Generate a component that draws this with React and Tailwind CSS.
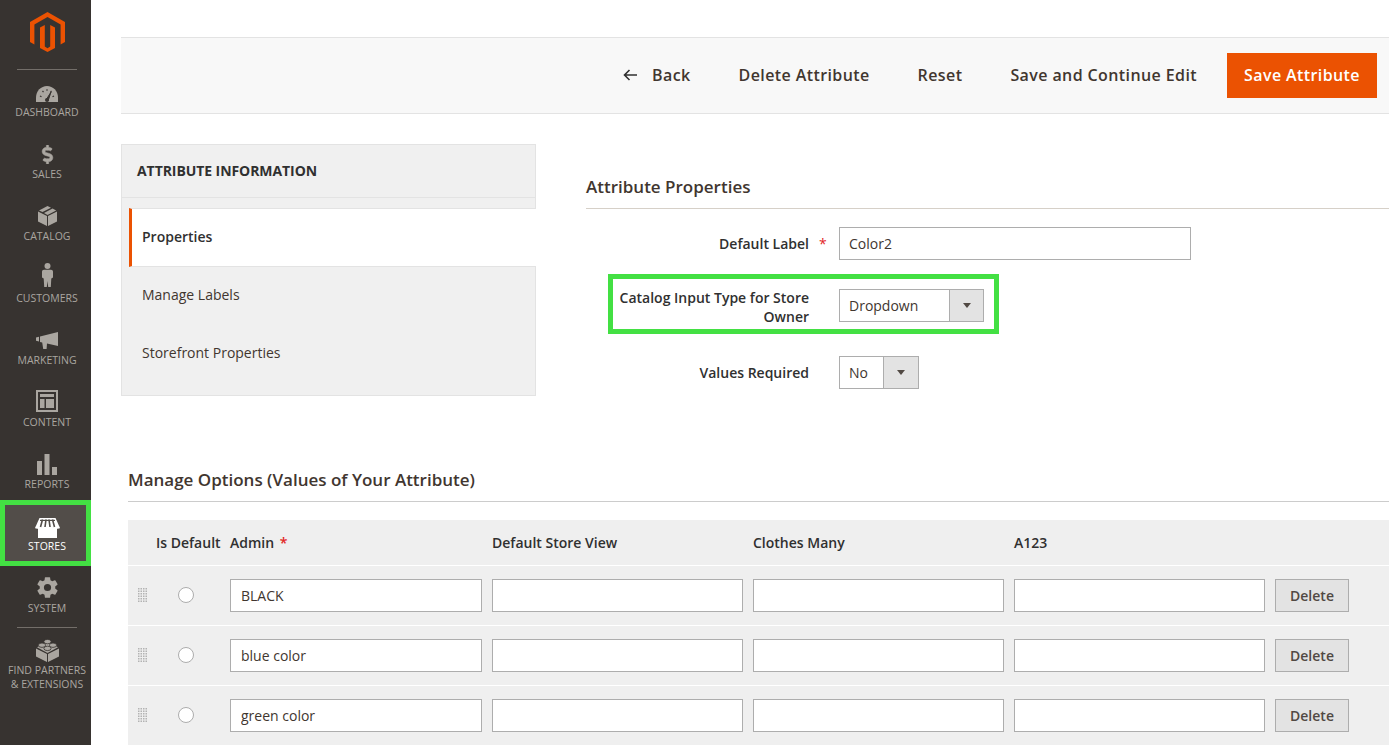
import { FaDollarSign } from "react-icons/fa";
import { IoSettingsSharp } from "react-icons/io5";

function MagentoLogo() {
  return (
    <svg width="35" height="40" viewBox="0 0 35 40" fill="#eb5202">
      <path d="M17.5 0L35 10V30L30.6 32.5V12.6L17.5 5L4.4 12.6V32.5L0 30V10Z" />
      <path d="M10 15.6L14.8 13V34.6L17.5 36.2L20.2 34.6V13L25 15.6V36L17.5 40L10 36Z" />
    </svg>
  );
}

function GaugeIcon() {
  return (
    <svg width="22" height="16" viewBox="0 0 22 16" className="mb-[3px]">
      <path d="M0 16V11.5C0 5 5 0 11 0S22 5 22 11.5V16Z" fill="currentColor" />
      <path d="M12 15L15 6L10 14Z" fill="#373330" stroke="#373330" strokeWidth="1" />
      <path d="M4 10l1.5.8M6.5 5l1 1.2M11 3.2v1.6M15.5 5l-1 1.2M18 10l-1.5.8" stroke="#373330" strokeWidth="1.2" />
      <circle cx="11" cy="14" r="2" fill="#373330" />
    </svg>
  );
}

function BoxIcon() {
  return (
    <svg width="19" height="20" viewBox="0 0 19 20" className="mb-[3px]" fill="currentColor">
      <path d="M0 5.5L9 10V20L0 15.5Z" />
      <path d="M19 5.5L10 10V20L19 15.5Z" />
      <path d="M9.5 0L13 1.7L4.5 6L1 4.4Z" />
      <path d="M14.5 2.5L18.2 4.4L9.5 8.9L6 7.1Z" />
    </svg>
  );
}

function PersonIcon() {
  return (
    <svg width="11" height="24" viewBox="0 0 11 24" className="mb-[4px]" fill="currentColor">
      <circle cx="5.5" cy="3" r="3" />
      <path d="M2 6.8H9C10.2 6.8 11 7.6 11 8.8V14.5L9.3 15.4L8.8 24H6.2L5.5 18L4.8 24H2.2L1.7 15.4L0 14.5V8.8C0 7.6.8 6.8 2 6.8Z" />
    </svg>
  );
}

function MegaphoneIcon() {
  return (
    <svg width="22" height="17" viewBox="0 0 22 17" className="mb-[4px]" fill="currentColor">
      <path d="M0 5.5L3 4.8V9.5L0 8.8Z" />
      <path d="M4 4.6L22 0V14L11 11.4L10.6 17H7.2L6.2 10.5L4 10Z" />
    </svg>
  );
}

function ContentIcon() {
  return (
    <svg width="22" height="22" viewBox="0 0 22 22" className="mb-[3px]" fill="currentColor">
      <path fillRule="evenodd" d="M0 0H22V22H0ZM2 2V20H20V2Z" />
      <path d="M4 4H18V7H4ZM4 9H8.5V18H4ZM10 9H18V18H10Z" />
    </svg>
  );
}

function BarsIcon() {
  return (
    <svg width="20" height="21" viewBox="0 0 20 21" className="mb-[2px]" fill="currentColor">
      <path d="M0 7H5V21H0ZM7.5 0H12.5V21H7.5ZM15 13H20V21H15Z" />
    </svg>
  );
}

function StoreIcon() {
  return (
    <svg width="25" height="20" viewBox="0 0 25 20" className="mb-[1px]">
      <path d="M3 10H22V20H3Z" fill="#fff" />
      <path d="M4.5 0H20.5L25 10C25 11.5 0 11.5 0 10Z" fill="#fff" />
      <path d="M7.5 1.5L5.5 9M11 1.5L10 9M14 1.5L15 9M17.5 1.5L19.5 9" stroke="#524d49" strokeWidth="1.6" />
      <path d="M5 1.8H20V3H5Z" fill="#524d49" />
    </svg>
  );
}

function BrickIcon() {
  return (
    <svg width="23" height="23" viewBox="0 0 23 23" className="mb-[1px]" fill="currentColor">
      <path d="M0 9.5L11 15V23L0 17.5Z" />
      <path d="M23 9.5L12 15V23L23 17.5Z" />
      <path d="M11.5 3L22 8.2L11.5 14L1 8.2Z" />
      <ellipse cx="11.5" cy="2.6" rx="3.6" ry="2.2" stroke="#373330" strokeWidth=".8" />
      <ellipse cx="6" cy="6.2" rx="3.6" ry="2.2" stroke="#373330" strokeWidth=".8" />
      <ellipse cx="17" cy="6.2" rx="3.6" ry="2.2" stroke="#373330" strokeWidth=".8" />
      <ellipse cx="11.5" cy="9.4" rx="3.6" ry="2.2" stroke="#373330" strokeWidth=".8" />
    </svg>
  );
}

function DragHandle() {
  const dots = [];
  for (let r = 0; r < 6; r++) {
    for (let c = 0; c < 4; c++) {
      dots.push(<rect key={r + "-" + c} x={c * 2.5} y={r * 2.5} width="1.5" height="1.5" />);
    }
  }
  return (
    <svg width="9" height="14" viewBox="0 0 9 14" fill="#b3b3b3">
      {dots}
    </svg>
  );
}

function MenuItem({ icon, label }) {
  return (
    <div className="h-[62px] pl-[3px] flex flex-col items-center text-[#aaa6a0]">
      <div className="h-[35px] flex items-end justify-center">{icon}</div>
      <span className="text-[10.5px] leading-[14px] uppercase">{label}</span>
    </div>
  );
}

function Sidebar() {
  return (
    <aside className="w-[91px] h-[745px] shrink-0 bg-[#373330] flex flex-col">
      <div className="pt-[12px] pl-[3px] flex justify-center">
        <MagentoLogo />
      </div>
      <div className="mt-[17px] ml-[17px] w-[60px] h-px bg-[#736e69]" />
      <MenuItem label="Dashboard" icon={<GaugeIcon />} />
      <MenuItem label="Sales" icon={<FaDollarSign className="mb-[3px] text-[19px] stroke-current stroke-[14]" />} />
      <MenuItem label="Catalog" icon={<BoxIcon />} />
      <MenuItem label="Customers" icon={<PersonIcon />} />
      <MenuItem label="Marketing" icon={<MegaphoneIcon />} />
      <MenuItem label="Content" icon={<ContentIcon />} />
      <MenuItem label="Reports" icon={<BarsIcon />} />
      <div className="-mt-[4px] h-[66px] border-[5px] border-[#43e043] bg-[#524d49] pl-[3px] flex flex-col items-center text-white">
        <div className="h-[34px] flex items-end justify-center">
          <StoreIcon />
        </div>
        <span className="text-[10.5px] leading-[14px] uppercase">Stores</span>
      </div>
      <MenuItem label="System" icon={<IoSettingsSharp className="mb-[2px] text-[23px]" />} />
      <div className="-mt-[1px] ml-[17px] w-[60px] h-px bg-[#736e69]" />
      <div className="pl-[3px] flex flex-col items-center text-[#aaa6a0]">
        <div className="h-[35px] flex items-end justify-center">
          <BrickIcon />
        </div>
        <span className="text-[10.5px] leading-[14px] uppercase text-center whitespace-nowrap">
          Find Partners
          <br />& Extensions
        </span>
      </div>
    </aside>
  );
}

function Toolbar() {
  return (
    <div className="ml-[30px] h-[77px] bg-[#f8f8f8] border-y border-[#e3e3e3] flex items-center justify-end pr-[12px] text-[16px] font-semibold tracking-[0.025em] text-[#41362f]">
      <div className="flex items-center pb-[2px]">
        <svg width="14" height="12" viewBox="0 0 14 12" className="mr-[15px]" fill="none" stroke="#303030" strokeWidth="1.6">
          <path d="M14 6H1.5M6.5 1L1.5 6L6.5 11" />
        </svg>
        <span>Back</span>
        <span className="ml-[48px]">Delete Attribute</span>
        <span className="ml-[48px]">Reset</span>
        <span className="ml-[48px]">Save and Continue Edit</span>
      </div>
      <button className="ml-[30px] h-[45px] w-[150px] pb-[2px] bg-[#eb5202] text-white font-semibold tracking-[0.025em]">
        Save Attribute
      </button>
    </div>
  );
}

function SideTabs() {
  return (
    <div className="w-[415px] h-[252px] shrink-0 bg-[#f0f0f0] border border-[#e3e3e3]">
      <div className="h-[53px] border-b border-[#e3e3e3] pl-[15px] pb-[2px] flex items-center text-[14px] font-bold tracking-[-0.005em] uppercase text-[#303030]">
        Attribute Information
      </div>
      <div className="h-[10px]" />
      <div className="-mr-px ml-[7px] h-[59px] bg-white border-y border-[#e3e3e3] border-l-[3px] border-l-[#eb5202] pl-[10px] pb-[2px] flex items-center text-[14px] font-semibold text-[#303030]">
        Properties
      </div>
      <div className="ml-[20px] h-[58px] pb-[4px] flex items-center text-[14px] text-[#41362f]">Manage Labels</div>
      <div className="ml-[20px] h-[58px] pb-[4px] flex items-center text-[14px] text-[#41362f]">Storefront Properties</div>
    </div>
  );
}

function SelectBox({ value, width, arrowWidth }) {
  return (
    <div className={"h-[33px] flex bg-white border border-[#adadad] text-[14px] text-[#41362f] " + width}>
      <span className="flex-1 pl-[9px] leading-[31px]">{value}</span>
      <span className={"flex items-center justify-center bg-[#e3e3e3] border-l border-[#adadad] " + arrowWidth}>
        <span className="w-0 h-0 border-x-[4px] border-x-transparent border-t-[5px] border-t-[#514943]" />
      </span>
    </div>
  );
}

function AttributeProperties() {
  return (
    <div className="flex-1 ml-[50px]">
      <h2 className="mt-[32px] h-[22px] text-[17px] leading-[22px] font-semibold text-[#41362f]">Attribute Properties</h2>
      <div className="mt-[10px] h-px bg-[#d6d0c8]" />
      <div className="mt-[18px] flex items-center h-[33px]">
        <label className="ml-[27px] w-[196px] text-right text-[14px] font-semibold text-[#303030]">Default Label</label>
        <span className="ml-[10px] w-[20px] text-[14px] text-[#e22626]">*</span>
        <input readOnly value="Color2" className="w-[352px] h-[33px] border border-[#adadad] pl-[9px] text-[14px] text-[#41362f] outline-none" />
      </div>
      <div className="mt-[14px] ml-[22px] w-[391px] h-[60px] border-[5px] border-[#43e043] flex items-center">
        <label className="w-[196px] pt-[6px] text-right text-[14px] leading-[19px] font-semibold text-[#303030]">
          Catalog Input Type for Store Owner
        </label>
        <div className="ml-[30px] mt-[3px]">
          <SelectBox value="Dropdown" width="w-[145px]" arrowWidth="w-[34px]" />
        </div>
      </div>
      <div className="mt-[22px] flex items-center h-[33px]">
        <label className="ml-[27px] w-[196px] text-right text-[14px] font-semibold text-[#303030]">Values Required</label>
        <div className="ml-[30px]">
          <SelectBox value="No" width="w-[80px]" arrowWidth="w-[35px]" />
        </div>
      </div>
    </div>
  );
}

function OptionRow({ value }) {
  return (
    <div className="h-[60px] border-t border-white flex items-start pt-[13px] bg-[#efefef]">
      <div className="w-[102px] h-[31px] shrink-0 flex items-center">
        <span className="ml-[10px] flex">
          <DragHandle />
        </span>
        <span className="ml-[31px] w-[16px] h-[16px] rounded-full bg-white border border-[#adadad]" />
      </div>
      <input readOnly value={value} className="w-[252px] h-[33px] border border-[#adadad] bg-white pl-[10px] text-[14px] text-[#41362f] outline-none" />
      <input readOnly className="ml-[10px] w-[251px] h-[33px] border border-[#adadad] bg-white" />
      <input readOnly className="ml-[10px] w-[251px] h-[33px] border border-[#adadad] bg-white" />
      <input readOnly className="ml-[10px] w-[251px] h-[33px] border border-[#adadad] bg-white" />
      <button className="ml-[10px] w-[74px] h-[33px] border border-[#adadad] bg-[#e3e3e3] text-[14px] font-semibold text-[#514943]">
        Delete
      </button>
    </div>
  );
}

function ManageOptions() {
  return (
    <div className="ml-[37px] mt-[74px]">
      <h2 className="h-[20px] text-[17px] leading-[20px] font-semibold text-[#41362f]">Manage Options (Values of Your Attribute)</h2>
      <div className="mt-[11px] h-px bg-[#cccccc]" />
      <div className="mt-[18px] h-[45px] bg-[#efefef] flex items-center text-[14px] font-semibold text-[#303030]">
        <span className="ml-[28px] w-[74px]">Is Default</span>
        <span className="w-[262px]">
          Admin <span className="ml-[2px] text-[#e22626]">*</span>
        </span>
        <span className="w-[261px]">Default Store View</span>
        <span className="w-[261px]">Clothes Many</span>
        <span>A123</span>
      </div>
      <OptionRow value="BLACK" />
      <OptionRow value="blue color" />
      <OptionRow value="green color" />
    </div>
  );
}

export default function App() {
  return (
    <div className="w-[1389px] h-[745px] overflow-hidden bg-white flex font-['Open_Sans',sans-serif]">
      <Sidebar />
      <main className="flex-1 min-w-0 pt-[37px]">
        <Toolbar />
        <div className="mt-[30px] ml-[30px] flex">
          <SideTabs />
          <AttributeProperties />
        </div>
        <ManageOptions />
      </main>
    </div>
  );
}
